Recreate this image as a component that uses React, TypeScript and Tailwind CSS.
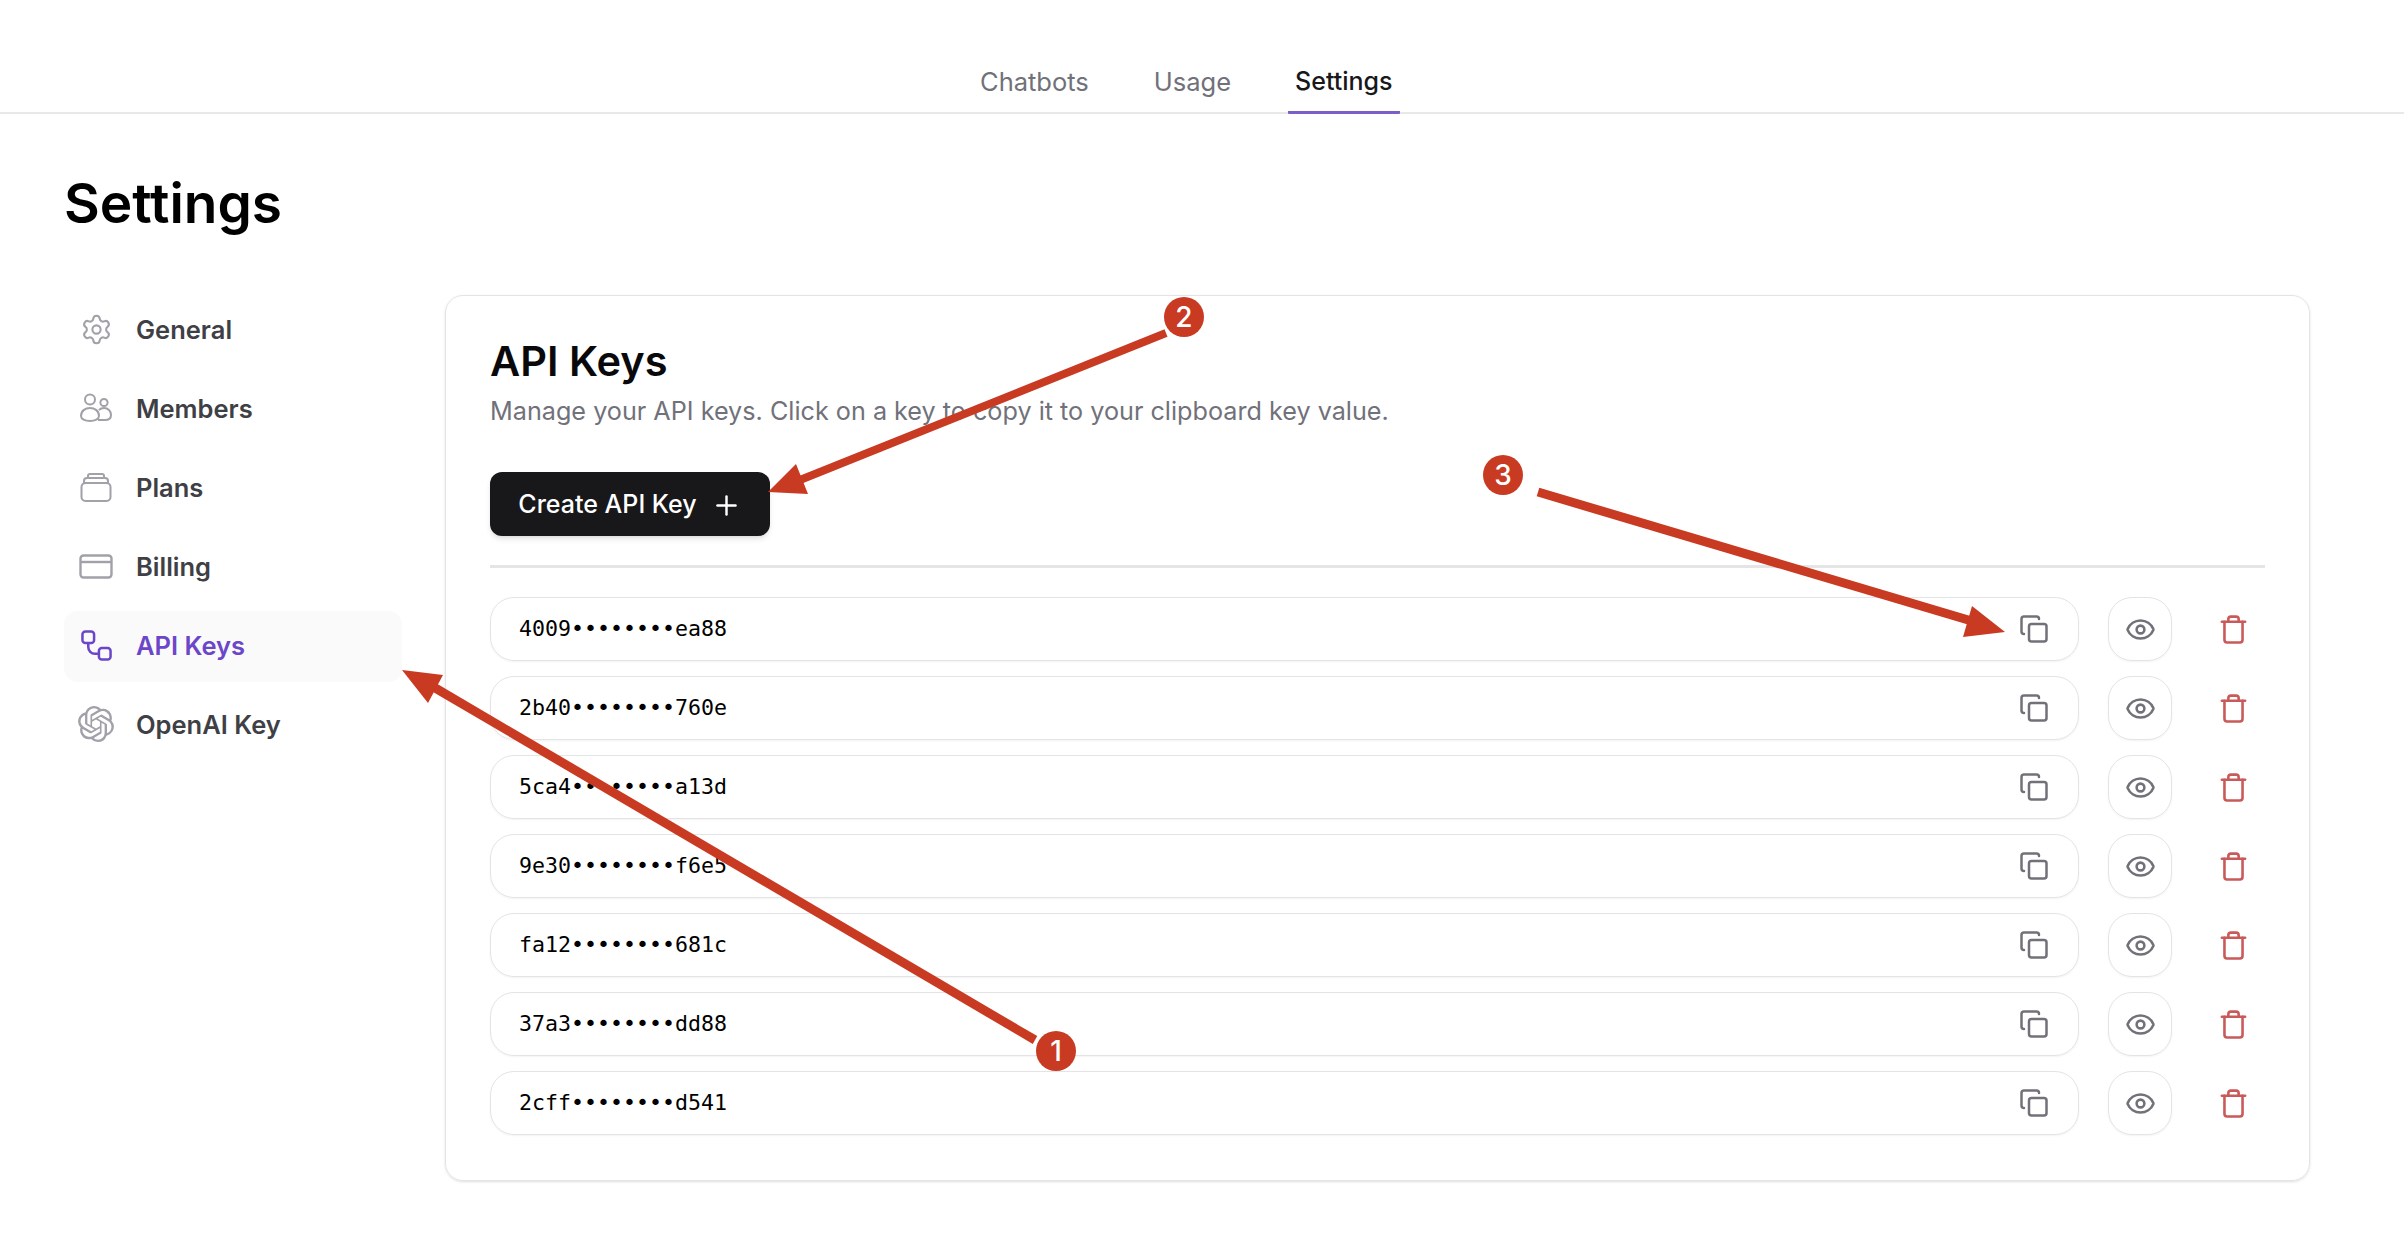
import React from 'react';
import { Copy, Eye, Plus, Settings, Trash } from 'lucide-react';
import { SiOpenai } from 'react-icons/si';

const keys = [
  '4009••••••••ea88',
  '2b40••••••••760e',
  '5ca4••••••••a13d',
  '9e30••••••••f6e5',
  'fa12••••••••681c',
  '37a3••••••••dd88',
  '2cff••••••••d541',
];

const MembersIcon = () => (
  <svg width="34" height="30" viewBox="0 0 34 30" fill="none" stroke="currentColor" strokeWidth="2">
    <circle cx="11" cy="6.5" r="5" />
    <circle cx="25" cy="9.5" r="3.6" />
    <path d="M2 23c0-5 4-8 9-8s9 3 9 8c0 3-4 5-9 5s-9-2-9-5Z" />
    <path d="M20 17c1-1 3-2 5-2 4 0 7 3 7 7 0 3-2 5-6 5h-7" />
  </svg>
);

const PlansIcon = () => (
  <svg width="32" height="29" viewBox="0 0 32 29" fill="none" stroke="currentColor" strokeWidth="2">
    <rect x="1.5" y="10" width="29" height="18" rx="4" />
    <path d="M4 10V8c0-2 1-3 3-3h18c2 0 3 1 3 3v2" />
    <path d="M8 5V3c0-1 1-2 2-2h12c1 0 2 1 2 2v2" />
  </svg>
);

const BillingIcon = () => (
  <svg width="34" height="25" viewBox="0 0 34 25" fill="none" stroke="currentColor" strokeWidth="2.4">
    <rect x="1.5" y="1.5" width="31" height="22" rx="3" />
    <path d="M1.5 8h31" />
  </svg>
);

const ApiIcon = () => (
  <svg width="31" height="31" viewBox="0 0 32 32" fill="none" stroke="currentColor" strokeWidth="2.6">
    <rect x="1.5" y="1.5" width="12" height="12" rx="3" />
    <rect x="18.5" y="18.5" width="12" height="12" rx="3" />
    <path d="M7.5 13.5v4c0 4 3 7 7 7h4" />
  </svg>
);

const navItems = [
  { label: 'General', icon: <Settings size={33} strokeWidth={1.5} /> },
  { label: 'Members', icon: <MembersIcon /> },
  { label: 'Plans', icon: <PlansIcon /> },
  { label: 'Billing', icon: <BillingIcon /> },
  { label: 'API Keys', icon: <ApiIcon />, active: true },
  { label: 'OpenAI Key', icon: <SiOpenai size={36} /> },
];

const Annotations = () => (
  <svg className="absolute inset-0 pointer-events-none" width="2404" height="1242" viewBox="0 0 2404 1242">
    <g fill="#c93a22" stroke="none">
      <path d="M1035 1040 L425 682" stroke="#c93a22" strokeWidth="9" fill="none" />
      <polygon points="402,670 443,675 428,703" />
      <path d="M1166 333 L790 484" stroke="#c93a22" strokeWidth="8" fill="none" />
      <polygon points="768,492 796,464 808,494" />
      <path d="M1538 492 L1975 622" stroke="#c93a22" strokeWidth="9" fill="none" />
      <polygon points="2005,632 1972,606 1963,637" />
      <circle cx="1056" cy="1051" r="20" />
      <circle cx="1184" cy="317" r="20" />
      <circle cx="1503" cy="475" r="20" />
    </g>
    <g fill="#ffffff" fontFamily="Inter, sans-serif" fontSize="28" fontWeight="500" textAnchor="middle">
      <text x="1056" y="1061">1</text>
      <text x="1184" y="327">2</text>
      <text x="1503" y="485">3</text>
    </g>
  </svg>
);

export default function App() {
  return (
    <div className="relative min-h-screen bg-white font-['Inter',sans-serif] text-[#18181b] overflow-hidden">
      {/* top tabs */}
      <header className="h-[114px] border-b-2 border-[#e8e8ea] flex items-end gap-[49px] pl-[972px] text-[25.5px]">
        <a className="px-2 pb-[11px] text-[#71717a]">Chatbots</a>
        <a className="px-2 pb-[11px] text-[#71717a]">Usage</a>
        <a className="px-[7px] pb-[11px] -mb-[2px] border-b-[3px] border-[#7a5fc9] rounded-b-[1px] text-[25px] font-medium text-[#18181b]">Settings</a>
      </header>

      <main className="pl-[64px] pr-[94px]">
        <h1 className="mt-[55px] mb-[58px] h-[68px] leading-[68px] text-[55px] font-semibold text-black">Settings</h1>

        <div className="flex items-start gap-[43px]">
          {/* sidebar */}
          <nav className="w-[338px] shrink-0 flex flex-col gap-2">
            {navItems.map((item) => (
              <a
                key={item.label}
                className={`h-[71px] rounded-[14px] flex items-center font-semibold text-[25.5px] ${item.active ? 'bg-[#fafafa] text-[#6b46c9]' : 'text-[#3f3f46]'}`}
              >
                <span className={`w-[64px] mr-[8px] mb-[3px] flex justify-center ${item.active ? 'text-[#6b46c9]' : 'text-[#a1a1aa]'}`}>{item.icon}</span>
                {item.label}
              </a>
            ))}
          </nav>

          {/* api keys card */}
          <section className="flex-1 h-[886px] border border-[#e4e4e7] rounded-[18px] px-[44px] pt-[37px] shadow-sm">
            <h2 className="text-[41.5px] leading-[56px] font-semibold text-[#09090b]">API Keys</h2>
            <p className="mt-[4px] text-[25.2px] leading-[36px] text-[#71717a]">
              Manage your API keys. Click on a key to copy it to your clipboard key value.
            </p>
            <button className="mt-[43px] h-[64px] w-[280px] pt-[2px] rounded-[12px] bg-[#18181b] text-white text-[25px] font-medium flex items-center justify-center gap-[14px] shadow-md">
              Create API Key
              <Plus size={31} strokeWidth={1.9} />
            </button>
            <div className="mt-[29px] mb-[29px] h-[3px] bg-[#e5e5e5]" />
            <div className="flex flex-col gap-[15px]">
              {keys.map((k) => (
                <div key={k} className="flex items-center gap-[29px]">
                  <div className="flex-1 h-[64px] rounded-[24px] border border-[#e4e4e7] shadow-xs flex items-center justify-between pl-[28px] pr-[12px]">
                    <span className="font-['DejaVu_Sans_Mono',monospace] text-[21.6px] text-black">{k}</span>
                    <button className="size-[64px] flex items-center justify-center text-[#71717a]">
                      <Copy size={30} strokeWidth={2} />
                    </button>
                  </div>
                  <button className="size-[64px] rounded-[24px] border border-[#e4e4e7] shadow-xs flex items-center justify-center text-[#71717a]">
                    <Eye size={31} strokeWidth={2} />
                  </button>
                  <button className="size-[64px] flex items-center justify-center text-[#c95a5a]">
                    <Trash size={31} strokeWidth={2} />
                  </button>
                </div>
              ))}
            </div>
          </section>
        </div>
      </main>

      <Annotations />
    </div>
  );
}
